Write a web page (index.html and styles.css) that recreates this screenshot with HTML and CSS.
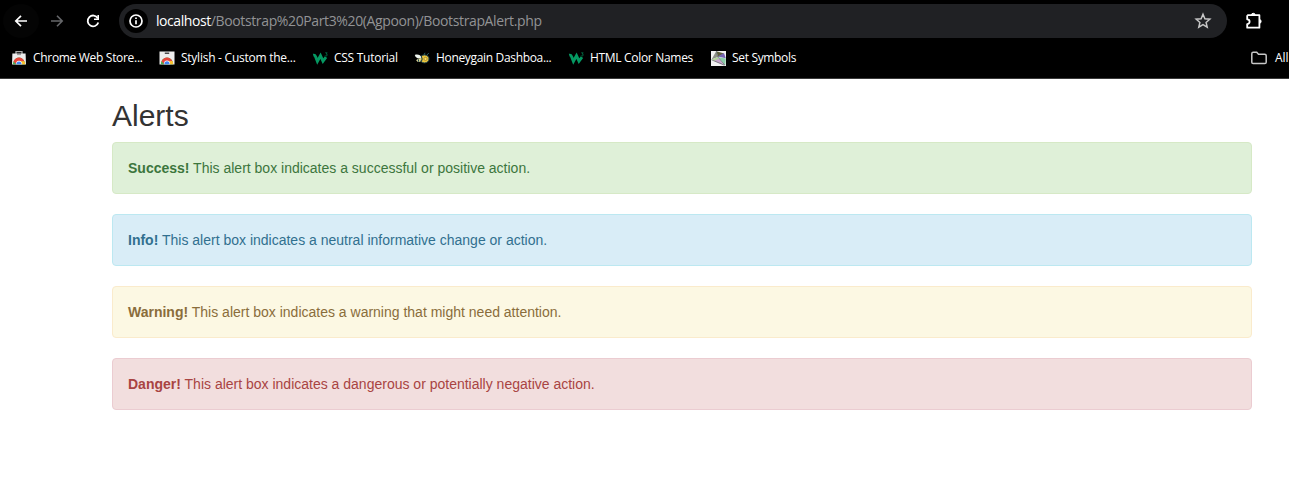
FILE: index.html
```html
<!DOCTYPE html>
<html lang="en">
<head>
<meta charset="utf-8">
<title>Alerts</title>
<link rel="stylesheet" href="styles.css">
</head>
<body>
<svg class="defs" width="0" height="0" aria-hidden="true">
  <symbol id="w3" viewBox="0 0 16 16">
    <path d="M1.2 5.2q1.6-.4 2.3 1.3l1.9 4.8 3.1-5.6 2.5 5.4 3-3.9" fill="none" stroke="#059862" stroke-width="2.9"/>
    <path d="M13.2 2.8h2l-1 1.2c1.7.1 1.3 2-.1 2-.5 0-.9-.2-1-.5" fill="none" stroke="#04764d" stroke-width=".8"/>
  </symbol>
  <symbol id="chrome" viewBox="0 0 16 9">
    <path d="M1.8 9a6.2 7 0 0 1 12.4 0z" fill="#4caf50"/>
    <path d="M2.4 5.8Q4.4 2 8 2t5.5 3.8H8L5.6 9z" fill="#e8453c"/>
    <path d="M9 5.6h4.4q.8 1.4.8 3.4h-5z" fill="#fbc02d"/>
    <path d="M4.8 9a3.2 3.9 0 0 1 6.4 0z" fill="#fff"/>
    <path d="M5.4 9a2.6 3.2 0 0 1 5.2 0z" fill="#4285f4"/>
  </symbol>
</svg>
<header class="browser">
  <div class="toolbar">
    <nav class="controls">
      <span class="control control-back"><svg width="16" height="16" viewBox="0 0 16 16"><path d="M14 8H3M8 2.8 2.8 8 8 13.2" fill="none" stroke="#fff" stroke-width="1.7"/></svg></span>
      <span class="control"><svg width="16" height="16" viewBox="0 0 16 16"><path d="M2 8h11M8 2.8 13.2 8 8 13.2" fill="none" stroke="#66676a" stroke-width="1.6"/></svg></span>
      <span class="control"><svg width="16" height="16" viewBox="0 0 16 16"><path d="M12.8 5.2A5.4 5.4 0 1 0 13.3 9.5" fill="none" stroke="#fff" stroke-width="1.8"/><path d="M14 2v5H9V5.4h3.4V2z" fill="#fff"/></svg></span>
    </nav>
    <div class="address">
      <span class="site-info"><svg width="16" height="16" viewBox="0 0 16 16"><circle cx="8" cy="8" r="6" fill="none" stroke="#fff" stroke-width="1.7"/><path d="M8 7.2v4M8 4.5v1.6" stroke="#fff" stroke-width="1.7"/></svg></span>
      <span class="url"><span class="host">localhost</span>/Bootstrap%20Part3%20(Agpoon)/BootstrapAlert.php</span>
      <svg class="star" width="18" height="18" viewBox="0 0 18 18"><path d="m9 2.3 1.9 4.5 4.9.4-3.7 3.2 1.1 4.8L9 12.7l-4.2 2.5 1.1-4.8-3.7-3.2 4.9-.4z" fill="none" stroke="#c7c7c7" stroke-width="1.5"/></svg>
    </div>
    <svg class="extensions" width="20" height="20" viewBox="0 0 20 20"><path d="M3.2 4.2H15.4v4.3M15.4 8v8.7H3.2v-3.6a2.4 2.4 0 0 0 0-4.8V4.2" fill="none" stroke="#fff" stroke-width="1.8" stroke-linejoin="round"/><path d="M7.5 3.8a1.8 1.5 0 0 1 3.6 0zM15.6 8.6a1.5 1.8 0 0 1 0 3.6z" fill="#fff" stroke="#fff"/></svg>
  </div>
  <div class="bookmarks">
    <a class="bookmark"><svg width="16" height="16" viewBox="0 0 16 16"><path d="M5 4V1.6h6V4" fill="none" stroke="#aaa" stroke-width="1.3"/><path d="M1.4 3.4h13.2l.4 11.2H1z" fill="#ececec"/><path d="M6 4.6h4" stroke="#999"/><use href="#chrome" x="0" y="5.6" width="16" height="9"/></svg><span class="label label-store">Chrome Web Store...</span></a>
    <a class="bookmark"><svg width="16" height="16" viewBox="0 0 16 16"><path d="M.5 1.5h15v13H.5z" fill="#eee"/><path d="M5.8 3.2h4.4" stroke="#222" stroke-width="1.2"/><use href="#chrome" x="0" y="5.5" width="16" height="9"/></svg><span class="label label-stylish">Stylish - Custom the...</span></a>
    <a class="bookmark"><svg width="16" height="16"><use href="#w3"/></svg><span class="label label-css">CSS Tutorial</span></a>
    <a class="bookmark"><svg width="16" height="16" viewBox="0 0 16 16"><path d="m10 5 1-2.2M13 5l1.8-2" stroke="#245b65"/><ellipse cx="10.5" cy="8.9" rx="4.5" ry="4" fill="#edc53b" stroke="#244a50"/><path d="M.8 4.9c3-.8 6 0 6.8 2.7C5.3 9 1.3 8.1.8 4.9z" fill="#eef4ee"/><path d="M2.2 10.2q1.2-2.2 5-2l-1 3.8q-2.8.4-4-1.8z" fill="#e8df9c"/><path d="M7.2 6q1.7 2.8.2 5.5M4 9.3l1 2.5" stroke="#173f48" stroke-width="1.1" fill="none"/><circle cx="11.5" cy="8.9" r="1.6" fill="#f6df66" stroke="#9a791f" stroke-width=".7"/></svg><span class="label label-honey">Honeygain Dashboa...</span></a>
    <a class="bookmark"><svg width="16" height="16"><use href="#w3"/></svg><span class="label label-html">HTML Color Names</span></a>
    <a class="bookmark bookmark-set"><svg width="16" height="16" viewBox="0 0 16 16"><path d="M0 1h15v15H0z" fill="#f3f3f3"/><path d="M5.5 1.2 13 3.5 7 7z" fill="#5f613e"/><path d="m5.3 1 1.5 6L.5 9.5z" fill="#8d9088"/><path d="M6.8 6.5 13 3l1.8 5.3z" fill="#7564b4"/><path d="m.5 9.8 6-2.8L10 13z" fill="#b3d49a"/><path d="m7 7 7.8 1.4-.5 6.8z" fill="#8bcda9"/><path d="m3 11 4.8-2.5 5.6 6.7z" fill="#c5a4cc"/><path d="m.5 9.8 12.9 5.4M6.8 7l7 8M5.3 1l1.5 6" fill="none" stroke="#5d6366" stroke-width=".7"/></svg><span class="label label-set">Set Symbols</span></a>
    <a class="all-bookmarks"><svg width="18" height="16" viewBox="0 0 18 16"><path d="M1.8 3.8q0-1.6 1.4-1.6h3.5l1.8 2h6.2q1.5 0 1.5 1.5v6.6q0 1.3-1.4 1.3H3.1q-1.3 0-1.3-1.3z" fill="none" stroke="#c7c7c7" stroke-width="1.5"/></svg><span class="label">All</span></a>
  </div>
</header>
<main class="container">
  <h2>Alerts</h2>
  <div class="alert alert-success"><strong>Success!</strong> This alert box indicates a successful or positive action.</div>
  <div class="alert alert-info"><strong>Info!</strong> This alert box indicates a neutral informative change or action.</div>
  <div class="alert alert-warning"><strong>Warning!</strong> This alert box indicates a warning that might need attention.</div>
  <div class="alert alert-danger"><strong>Danger!</strong> This alert box indicates a dangerous or potentially negative action.</div>
</main>
</body>
</html>
```
FILE: styles.css
```css
* { box-sizing: border-box; }
body {
  margin: 0;
  height: 477px;
  overflow: hidden;
  background: #fff;
  color: #333;
  font: 14px/20px "Liberation Sans", Arial, sans-serif;
}
svg { display: block; flex: none; }
.defs { position: absolute; }
.browser {
  height: 79px;
  background: #000;
  border-bottom: 1px solid #3a3a3a;
  font-family: "Open Sans", "Noto Sans", sans-serif;
  color: #fff;
}
.toolbar { display: flex; align-items: center; height: 42px; padding-left: 3px; }
.controls { display: flex; width: 116px; }
.control { width: 36px; height: 34px; display: grid; place-items: center; border-radius: 50%; }
.control-back { background: #040404; }
.address {
  display: flex;
  align-items: center;
  width: 1108px;
  height: 34px;
  padding: 0 15px 0 5px;
  border-radius: 17px;
  background: #202124;
}
.site-info { width: 24px; height: 24px; border-radius: 50%; background: #000; display: grid; place-items: center; }
.url { flex: 1; margin-left: 8px; font-size: 14px; color: #929395; white-space: nowrap; letter-spacing: -.37px; }
.host { color: #fff; letter-spacing: -.43px; }
.extensions { margin-left: 17px; }
.bookmarks {
  display: grid;
  grid-template-columns: 148px 153px 102px 154px 143px 539px 60px;
  align-items: center;
  height: 32px;
  padding-left: 11px;
}
.bookmark, .all-bookmarks { display: flex; align-items: center; gap: 6px; white-space: nowrap; }
.bookmark-set { gap: 5px; }
.label { font-size: 12px; line-height: 18px; }
.label-store { letter-spacing: -.31px; }
.label-stylish { letter-spacing: -.25px; }
.label-css { letter-spacing: -.27px; }
.label-honey { letter-spacing: -.33px; }
.label-html { letter-spacing: -.31px; }
.label-set { letter-spacing: -.33px; }
.all-bookmarks { gap: 7px; }
.container { width: 1170px; margin-left: 97px; padding: 0 15px; }
h2 { margin: 20px 0 10px; font-size: 30px; line-height: 33px; font-weight: 400; }
.alert { height: 52px; margin-bottom: 20px; padding: 15px; border: 1px solid; border-radius: 4px; }
.alert-success { color: #3c763d; background: #dff0d8; border-color: #d6e9c6; }
.alert-info { color: #31708f; background: #d9edf7; border-color: #bce8f1; }
.alert-warning { color: #8a6d3b; background: #fcf8e3; border-color: #faebcc; }
.alert-danger { color: #a94442; background: #f2dede; border-color: #ebccd1; }
```
